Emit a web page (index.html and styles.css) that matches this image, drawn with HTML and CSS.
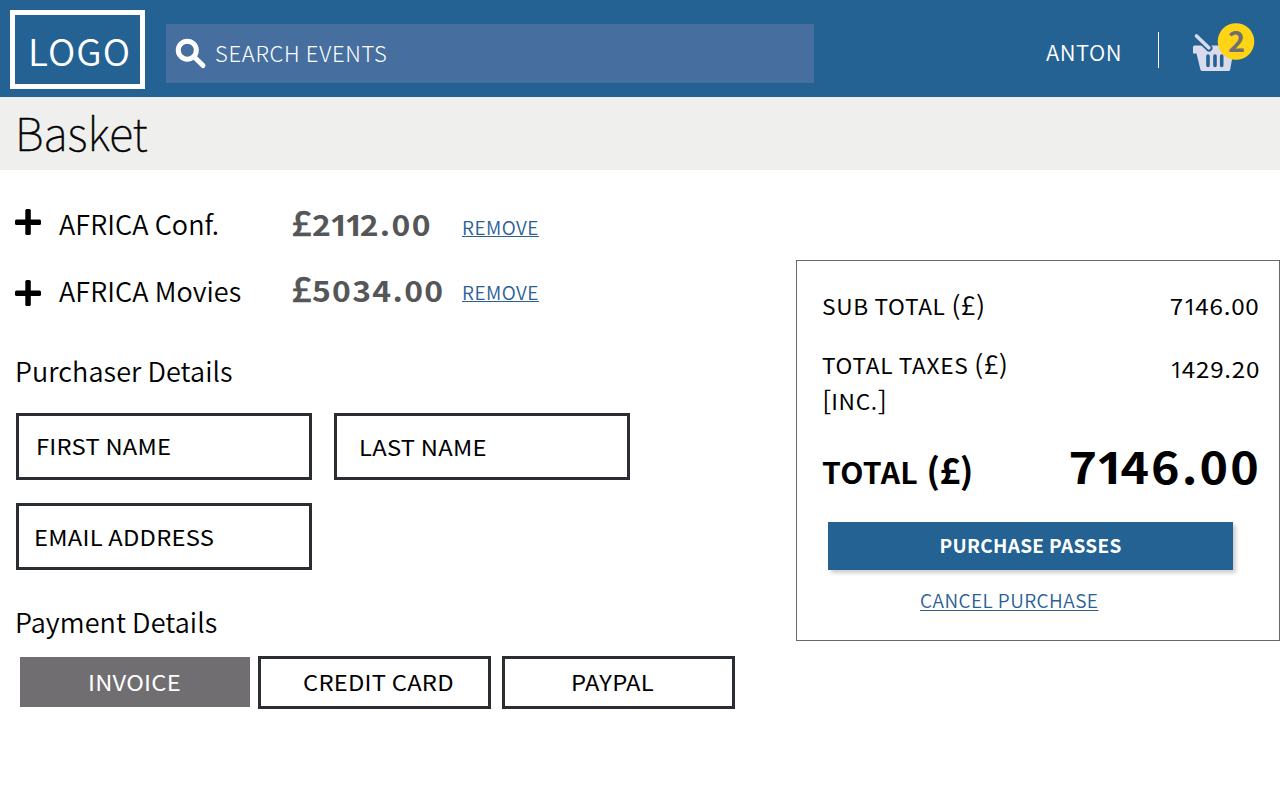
FILE: index.html
```html
<!DOCTYPE html>
<html lang="en">
<head>
<meta charset="utf-8">
<title>Basket</title>
<link rel="stylesheet" href="styles.css">
</head>
<body>
<header class="header">
  <div class="logo"><span class="logo-text">LOGO</span></div>
  <div class="search">
    <svg class="search-icon" width="32" height="32" viewBox="0 0 32 32" fill="none" stroke="#fff"><circle cx="12.3" cy="12.2" r="9" stroke-width="5"/><path d="M19 18.8l9 8.700" stroke-width="5" stroke-linecap="round"/></svg>
    <span>SEARCH EVENTS</span>
  </div>
  <div class="user">ANTON</div>
  <div class="divider"></div>
  <div class="cart">
    <svg width="66" height="54" viewBox="0 0 66 54">
      <path fill="#d9dbec" d="M3 27q0-1.500 1.500-1.500H45V33.500h-2L40.200 49.500q-.3 1.500-2 1.500H12.500q-1.700 0-2.100-1.500L6.500 33.500H3z"/>
      <path d="M6.500 16l12.500 12" stroke="#246293" stroke-width="7" stroke-linecap="round"/>
      <path d="M6.500 16l12.300 11.800" stroke="#d9dbec" stroke-width="3.600" stroke-linecap="round"/>
      <path d="M18 36v9.500M25 36v9.500M31.700 36v9.500" stroke="#246293" stroke-width="3.600" stroke-linecap="round"/>
      <circle cx="46" cy="21.500" r="18.300" fill="#ffd414"/>
    </svg>
    <span class="badge">2</span>
  </div>
</header>
<h1 class="title">Basket</h1>
<main class="main">
  <div class="left">
    <div class="item">
      <svg class="plus" width="26" height="26" viewBox="0 0 26 26"><rect y="10.500" width="26" height="5.500" rx="1.500"/><rect x="10.300" width="5.500" height="26" rx="1.500"/></svg>
      <span class="name">AFRICA Conf.</span>
      <span class="price"><span class="pound">£</span><span class="tight">2</span><span class="one">1</span><span class="one">1</span>2.00</span>
      <a class="remove">REMOVE</a>
    </div>
    <div class="item second">
      <svg class="plus" width="26" height="26" viewBox="0 0 26 26"><rect y="10.500" width="26" height="5.500" rx="1.500"/><rect x="10.300" width="5.500" height="26" rx="1.500"/></svg>
      <span class="name">AFRICA Movies</span>
      <span class="price"><span class="pound">£</span>5034.00</span>
      <a class="remove">REMOVE</a>
    </div>
    <h2 class="heading purchaser">Purchaser Details</h2>
    <div class="fields">
      <div class="field first"><span class="caps">FIRST NAME</span></div>
      <div class="field last"><span class="caps">LAST NAME</span></div>
      <div class="field email"><span class="caps">EMAIL ADDRESS</span></div>
    </div>
    <h2 class="heading payment">Payment Details</h2>
    <div class="methods">
      <div class="method invoice"><span class="caps">INVOICE</span></div>
      <div class="method credit"><span class="caps">CREDIT CARD</span></div>
      <div class="method paypal"><span class="caps">PAYPAL</span></div>
    </div>
  </div>
  <section class="summary">
    <div class="row sub">
      <span class="label">SUB TOTAL <span class="big">(£)</span></span>
      <span class="value"><span class="tight">7</span><span class="one">1</span>46.00</span>
    </div>
    <div class="row taxes">
      <span class="label">TOTAL TAXES <span class="big">(£)</span><br><span class="big">[</span>INC.<span class="big">]</span></span>
      <span class="value"><span class="one">1</span>429.20</span>
    </div>
    <div class="row total">
      <span class="label">TOTAL <span class="big">(£)</span></span>
      <span class="value"><span class="tight">7</span><span class="one">1</span>46.00</span>
    </div>
    <div class="purchase">PURCHASE PASSES</div>
    <a class="cancel">CANCEL PURCHASE</a>
  </section>
</main>
</body>
</html>
```
FILE: styles.css
```css
* { box-sizing: border-box; }
body {
  margin: 0;
  width: 1280px;
  height: 800px;
  overflow: hidden;
  background: #fff;
  color: #000;
  font-family: "Noto Sans CJK JP", "Noto Sans", sans-serif;
  white-space: nowrap;
}

/* Header */
.header {
  display: flex;
  align-items: flex-start;
  height: 97px;
  padding: 10px 0 0 10px;
  background: #246293;
  color: #fff;
}
.logo {
  width: 135px;
  height: 79px;
  padding-left: 13px;
  border: 5px solid #fff;
  font-size: 37px;
  font-weight: 350;
  line-height: 70px;
  letter-spacing: 1.100px;
}
.search {
  display: flex;
  width: 648px;
  height: 59px;
  margin: 14px 0 0 21px;
  padding-left: 9px;
  background: #466f9f;
  font-size: 22px;
  font-weight: 300;
  line-height: 56px;
  letter-spacing: .7px;
}
.search-icon { margin: 14px 8px 0 0; }
.user {
  width: 112px;
  margin-left: 232px;
  font-size: 22px;
  font-weight: 350;
  line-height: 82px;
  letter-spacing: .5px;
}
.divider { width: 1px; height: 36px; margin-top: 22px; background: #fff; }
.cart { position: relative; margin: 10px 0 0 31px; }
.badge {
  position: absolute;
  left: 38px;
  top: 0;
  color: #706f6f;
  font-size: 29px;
  font-weight: 700;
  line-height: 38px;
}
.title {
  height: 73px;
  margin: 0;
  padding-left: 15px;
  background: #efefed;
  font-size: 45px;
  font-weight: 100;
  line-height: 70px;
  -webkit-text-stroke: .5px #000;
}

/* Basket contents */
.main { display: flex; align-items: flex-start; }
.left { width: 796px; padding: 30px 0 0 15px; }
.item {
  display: grid;
  grid-template-columns: 44px 232px 171px auto;
  justify-content: start;
  align-items: start;
  height: 66px;
}
.plus { margin-top: 9px; }
.second .plus { margin-top: 14px; }
.name { font-size: 27px; font-weight: 350; line-height: 47px; letter-spacing: .080px; }
.second .name { line-height: 50px; }
.price {
  justify-self: start;
  color: #555658;
  font-size: 29px;
  font-weight: 700;
  line-height: 47px;
  letter-spacing: 1.200px;
  transform: scaleX(1.1);
  transform-origin: left;
}
.pound { font-size: 34px; font-weight: 500; line-height: 0; letter-spacing: -.4px; -webkit-text-stroke: .3px #555658; }
.one { font-family: "Open Sans", "Noto Sans", sans-serif; line-height: 0; }
.price .one { letter-spacing: -3px; }
.price .tight { letter-spacing: -.8px; }
.remove {
  color: #2a6096;
  font-size: 19px;
  font-weight: 350;
  line-height: 53px;
  letter-spacing: .5px;
  text-decoration: underline;
  text-decoration-thickness: 1px;
  text-underline-offset: 1px;
}
.second .remove { line-height: 51px; }

/* Forms */
.heading { margin: 0; font-size: 27px; font-weight: 350; letter-spacing: .080px; }
.purchaser { margin-top: 8px; line-height: 61px; }
.payment { margin-top: 20px; line-height: 63px; }
.fields {
  display: grid;
  grid-template-columns: 296px 296px;
  gap: 23px 22px;
  margin: 12px 0 0 1px;
}
.caps { display: inline-block; letter-spacing: .220px; transform: scaleX(1.08); transform-origin: left; }
.field {
  height: 67px;
  border: 3px solid #2a2d31;
  font-size: 22px;
  line-height: 60px;
}
.first { padding-left: 17px; line-height: 58px; }
.last { padding-left: 22px; }
.email { padding-left: 15px; }
.methods { display: flex; align-items: flex-start; margin: 3px 0 0 5px; }
.method {
  width: 233px;
  height: 53px;
  border: 3px solid #2a2d31;
  font-size: 22px;
  line-height: 44px;
}
.invoice {
  width: 230px;
  height: 50px;
  margin: 1px 8px 0 0;
  padding-left: 68px;
  border: 0;
  background: #706e71;
  color: #fff;
  line-height: 48px;
}
.credit { margin-right: 11px; padding-left: 42px; }
.paypal { padding-left: 66px; }

/* Order summary */
.summary {
  width: 484px;
  height: 381px;
  margin-top: 90px;
  padding: 20px 18px 0 25px;
  border: 1px solid #68696b;
}
.row {
  display: flex;
  justify-content: space-between;
  align-items: flex-start;
  font-size: 21px;
  line-height: 50px;
}
.label { margin-left: -.5px; letter-spacing: .6px; transform: scaleX(1.08); transform-origin: left; }
.big { font-size: 26px; font-weight: 350; line-height: 0; letter-spacing: 0; }
.value { margin-right: 1px; font-size: 22px; line-height: 48px; letter-spacing: .700px; transform: scaleX(1.1); transform-origin: right; }
.value .one { letter-spacing: -1.700px; }
.value .tight { letter-spacing: 0; }
.taxes { margin-top: 16px; line-height: 36px; }
.taxes .value { line-height: 42px; }
.total { margin-top: 21px; font-weight: 700; line-height: 62px; }
.total .label { margin-left: 0; font-size: 29px; letter-spacing: .3px; word-spacing: 1px; transform: scaleX(1.040); }
.total .big { font-size: 35px; font-weight: 700; letter-spacing: -.8px; }
.total .value { margin-right: 0; font-size: 44px; line-height: 50px; letter-spacing: 1.900px; }
.total .one { letter-spacing: -3px; }
.total .tight { letter-spacing: -1px; }
.purchase {
  width: 405px;
  height: 48px;
  margin: 20px 0 0 6px;
  background: #246293;
  box-shadow: 3px 3px 4px rgba(0, 0, 0, .2);
  color: #fff;
  font-size: 19px;
  font-weight: 700;
  line-height: 45px;
  letter-spacing: .320px;
  text-align: center;
}
.cancel {
  display: block;
  width: max-content;
  margin-left: 98px;
  color: #2a6096;
  font-size: 19px;
  font-weight: 350;
  line-height: 59px;
  letter-spacing: .450px;
  text-decoration: underline;
  text-decoration-thickness: 1px;
  text-underline-offset: 2px;
}
```
